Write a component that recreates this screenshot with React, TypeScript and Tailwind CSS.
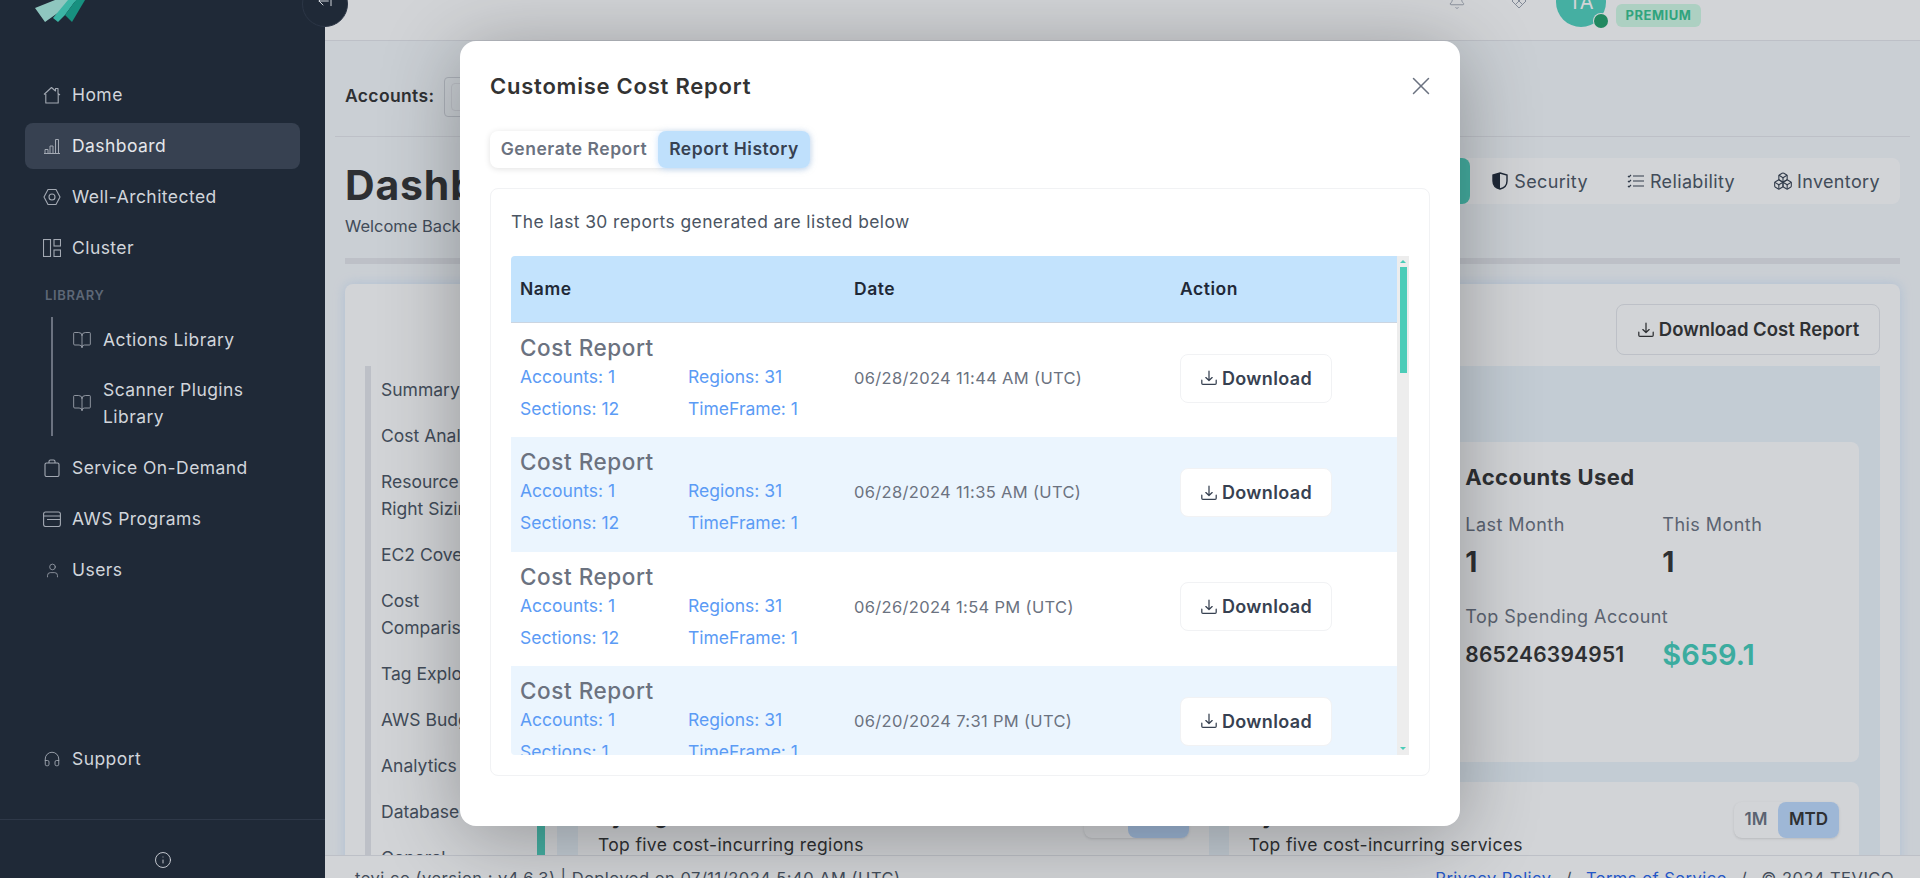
import React from "react";
import { BookOpen, User, Headphones, Info, X, Bell, ArrowRightFromLine, Boxes } from "lucide-react";

const Dl = ({ s = 18 }: { s?: number }) => (
  <svg width={s} height={s} viewBox="0 0 20 20" fill="none" stroke="currentColor" strokeWidth="1.4" strokeLinecap="round" strokeLinejoin="round" className="shrink-0">
    <path d="M10 2.500v10M6.500 9.500l3.500 3.300 3.500-3.300" />
    <path d="M2 12.500v3.200c0 .7.5 1.300 1.200 1.300h13.600c.7 0 1.200-.6 1.200-1.300v-3.200" />
  </svg>
);

const HomeI = () => (
  <svg width="18" height="18" viewBox="0 0 18 18" fill="none" stroke="currentColor" strokeWidth="1.1" strokeLinejoin="round">
    <path d="M1 8.500L8.500 1.500 12.500 5V2.500h2.500V7.500L17 9M2.800 8v9h12.400V8" />
  </svg>
);
const BarsI = () => (
  <svg width="18" height="18" viewBox="0 0 18 18" fill="none" stroke="currentColor" strokeWidth="1">
    <path d="M1 16.500h16M2 16.500v-4h3v4M7 16.500V9h3v7.500M12.500 16.500V2.500h3v14" />
  </svg>
);
const HexI = () => (
  <svg width="18" height="18" viewBox="0 0 18 18" fill="none" stroke="currentColor" strokeWidth="1.1">
    <path d="M5 1.500h8L17 9l-4 7.500H5L1 9z" />
    <circle cx="9" cy="9" r="3" />
  </svg>
);
const ClusterI = () => (
  <svg width="18" height="18" viewBox="0 0 18 18" fill="none" stroke="currentColor" strokeWidth="1.1">
    <rect x="0.500" y="0.500" width="7" height="17" />
    <rect x="11" y="0.500" width="6.500" height="6.500" />
    <rect x="11" y="11" width="6.500" height="6.500" />
  </svg>
);
const BagI = () => (
  <svg width="16" height="18" viewBox="0 0 16 18" fill="none" stroke="currentColor" strokeWidth="1.1">
    <rect x="1" y="4" width="14" height="13.500" rx="1.500" />
    <path d="M5 4V2.500C5 1.500 5.700 1 6.500 1h3c.8 0 1.500.5 1.500 1.500V4" />
  </svg>
);
const ProgI = () => (
  <svg width="18" height="16" viewBox="0 0 18 16" fill="none" stroke="currentColor" strokeWidth="1.1">
    <rect x="0.600" y="1" width="16.800" height="14.500" rx="2" />
    <path d="M0.600 5h16.800M4 8.500h13.400" />
  </svg>
);

const label = "text-[17.500px] tracking-[0.025em]";

const Item = ({ icon, text, active }: { icon: React.ReactNode; text: string; active?: boolean }) => (
  <div className={`mx-[25px] flex h-[46px] items-center gap-[11px] rounded-lg pl-[18px] ${active ? "bg-[#374151] text-[#e5e7eb]" : "text-[#d1d5db]"}`}>
    <span className="flex w-[18px] justify-center text-[#a3a9b3]">{icon}</span>
    <span className={label}>{text}</span>
  </div>
);

const Sidebar = () => (
  <aside className="relative z-20 flex w-[325px] shrink-0 flex-col bg-[#1f2937]">
    <svg width="60" height="24" viewBox="0 0 60 24" className="absolute left-[32px] top-0">
      <path d="M3 8 L13 22 L30 10 L45 0 L23 0z" fill="#8fc6bf" />
      <path d="M21 18 L26 22 L33 15 L44 0 L36 0z" fill="#3bb5a5" />
      <path d="M33 15 L40 22 L53 0 L44 0z" fill="#17907f" />
    </svg>
    <div className="absolute right-[-23px] top-[-19px] flex h-[46px] w-[46px] items-end justify-center rounded-full border border-[#2c3646] bg-[#1f2937] pb-[17px] text-[#d1d5db]">
      <ArrowRightFromLine size={16} strokeWidth={1.5} className="rotate-180" />
    </div>
    <nav className="mt-[72px] flex flex-1 flex-col gap-[5px]">
      <Item icon={<HomeI />} text="Home" />
      <Item active icon={<BarsI />} text="Dashboard" />
      <Item icon={<HexI />} text="Well-Architected" />
      <Item icon={<ClusterI />} text="Cluster" />
      <div className="ml-[45px] mt-[11px] text-[13px] font-semibold leading-[16px] tracking-[0.05em] text-[#5d6776]">LIBRARY</div>
      <div className="mb-[4px] ml-[51px] mt-[9px] flex flex-col border-l-2 border-[#6b7280]">
        <div className="flex h-[46px] items-center gap-[11px] pl-[19px] text-[#d1d5db]">
          <BookOpen size={20} strokeWidth={1} className="text-[#a3a9b3]" />
          <span className={label}>Actions Library</span>
        </div>
        <div className="mt-[6px] flex h-[67px] items-center gap-[11px] pl-[19px] text-[#d1d5db]">
          <BookOpen size={20} strokeWidth={1} className="text-[#a3a9b3]" />
          <span className={`${label} leading-[27px]`}>Scanner Plugins<br />Library</span>
        </div>
      </div>
      <Item icon={<BagI />} text="Service On-Demand" />
      <Item icon={<ProgI />} text="AWS Programs" />
      <Item icon={<User size={17} strokeWidth={1.1} />} text="Users" />
      <div className="mt-auto">
        <Item icon={<Headphones size={18} strokeWidth={1.2} />} text="Support" />
      </div>
    </nav>
    <div className="mt-[37px] flex h-[59px] items-start justify-center border-t border-[#2e3848] pt-[31px] text-[#d1d5db]">
      <Info size={18} strokeWidth={1.2} />
    </div>
  </aside>
);

const leftNav: string[][] = [
  ["Summary"], ["Cost Analysis"], ["Resource", "Right Sizing"], ["EC2 Coverage"], ["Cost", "Comparison"],
  ["Tag Explorer"], ["AWS Budgets"], ["Analytics"], ["Database"], ["General"],
];

const Background = () => (
  <main className="flex min-w-0 flex-1 flex-col bg-[#f6f9fc] text-[#333]">
    <header className="flex h-[41px] shrink-0 items-end justify-end border-b border-[#e5e7eb] bg-white pr-[219px]">
      <Bell size={18} strokeWidth={1.2} className="mb-[30px] text-[#9ca3af]" />
      <svg width="18" height="18" viewBox="0 0 18 18" fill="none" stroke="#9ca3af" strokeWidth="1" className="mb-[30px] ml-[44px]">
        <path d="M9 2l7 7-7 7-7-7zM5.500 5.500L12.500 12.500M12.500 5.500L5.500 12.500" />
      </svg>
      <div className="relative mb-[13px] ml-[28px] flex h-[50px] w-[50px] items-center justify-center rounded-full bg-[#4fd1bd] text-[20px] text-white">
        TA
        <span className="absolute bottom-[-1px] right-[-2px] h-[14px] w-[14px] rounded-full bg-[#22a06b] ring-1 ring-white" />
      </div>
      <div className="mb-[13px] ml-[10px] flex h-[23px] w-[85px] items-center justify-center rounded-md bg-[#d1fae5] text-[13px] font-bold tracking-[0.04em] text-[#34c38f]">PREMIUM</div>
    </header>
    <div className="min-h-0 flex-1 overflow-hidden pl-[20px] pr-[20px]">
      <div className="-mx-[10px] flex h-[96px] items-center border-b border-[#e5e7eb] px-[10px] pt-[16px]">
        <span className="text-[17.500px] font-semibold tracking-[0.02em]">Accounts:</span>
        <div className="ml-[10px] flex h-[40px] w-[200px] items-center rounded border border-[#d1d5db] px-[6px]">
          <div className="h-[28px] w-[60px] rounded border border-[#e5e7eb]" />
        </div>
      </div>
      <div className="mt-[21px] flex items-start justify-between">
        <div className="mt-[2px]">
          <h1 className="text-[41px] font-bold leading-[50px] tracking-[0.02em]">Dashboard</h1>
          <p className="mt-[6px] text-[16.500px] leading-[20px] text-[#4b5563]">Welcome Back, Tevico</p>
        </div>
        <div className="flex h-[46px] items-center rounded-lg bg-white pr-[20px] text-[18px] text-[#4b5563]">
          <div className="h-[46px] w-[120px] rounded-lg bg-[#4fd1bd]" />
          <svg width="16" height="18" viewBox="0 0 16 18" className="ml-[22px] mr-[6px]"><path d="M8 1l7 2v6c0 4-3 7-7 8-4-1-7-4-7-8V3z" fill="none" stroke="#1f2937" strokeWidth="1.4" /><path d="M8 1L1 3v6c0 4 3 7 7 8z" fill="#1f2937" /></svg>
          <span className="tracking-[0.02em]">Security</span>
          <svg width="17" height="14" viewBox="0 0 17 14" fill="none" stroke="#374151" strokeWidth="1.2" className="ml-[39px] mr-[6px]"><path d="M6 2h11M6 7h11M6 12h11M1 2l1 1 2-2M1 7l1 1 2-2M1 12l1 1 2-2" /></svg>
          <span className="tracking-[0.02em]">Reliability</span>
          <Boxes size={20} strokeWidth={1.3} color="#374151" className="ml-[38px] mr-[4px]" />
          <span className="tracking-[0.02em]">Inventory</span>
        </div>
      </div>
      <div className="mt-[22px] h-[6px] bg-[#e5e7eb]" />
      <section className="mt-[20px] rounded-lg bg-white p-[20px] shadow-[0_0_12px_rgba(147,197,253,0.35)]">
        <div className="flex justify-end">
          <button className="flex h-[51px] w-[264px] items-center justify-center gap-[4px] rounded-lg border border-[#e5e7eb] text-[18.500px] font-semibold">
            <Dl /> Download Cost Report
          </button>
        </div>
        <div className="mt-[11px] flex gap-[12px]">
          <div className="flex w-[180px] shrink-0 justify-between">
            <div className="w-[172px] overflow-hidden whitespace-nowrap border-l-[6px] border-[#e5e7eb] pl-[10px] text-[17.500px] leading-[27px] text-[#4b5563]">
              {leftNav.map((lines) => (
                <div key={lines.join()} className="py-[9.500px]">
                  {lines.map((l) => <div key={l}>{l}</div>)}
                </div>
              ))}
            </div>
            <div className="mt-[420px] h-[200px] w-[8px] bg-[#4fd1bd]" />
          </div>
          <div className="min-w-0 flex-1 bg-[#edf5fc] px-[21px] pt-[76px]">
            <div className="grid grid-cols-3 gap-[20px]">
              <div className="h-[320px] rounded-lg bg-white" />
              <div className="h-[320px] rounded-lg bg-white" />
              <div className="h-[320px] rounded-lg bg-white p-[20px]">
                <h3 className="mt-[1px] text-[22px] font-bold leading-[28px] tracking-[0.02em]">Accounts Used</h3>
                <div className="mt-[23px] grid grid-cols-[197px_1fr] text-[#6b7280]">
                  <div className="text-[18px] leading-[22px] tracking-[0.025em]">Last Month</div>
                  <div className="text-[18px] leading-[22px] tracking-[0.025em]">This Month</div>
                  <div className="mt-[9px] text-[28px] font-bold leading-[34px] text-[#333]">1</div>
                  <div className="mt-[9px] text-[28px] font-bold leading-[34px] text-[#333]">1</div>
                </div>
                <div className="mt-[27px] text-[18px] leading-[22px] tracking-[0.025em] text-[#6b7280]">Top Spending Account</div>
                <div className="mt-[7px] grid grid-cols-[197px_1fr] items-center">
                  <div className="text-[21px] font-semibold tracking-[0.01em]">865246394951</div>
                  <div className="text-[29px] font-semibold leading-[40px] text-[#43cdba]">$659.1</div>
                </div>
              </div>
            </div>
            <div className="mt-[20px] grid grid-cols-2 gap-[20px]">
              {[["By Region", "Top five cost-incurring regions"], ["By Service", "Top five cost-incurring services"]].map(([h, s]) => (
                <div key={h} className="flex h-[200px] justify-between rounded-lg bg-white p-[20px]">
                  <div>
                    <h3 className="text-[20px] font-bold leading-[30px] tracking-[0.02em]">{h}</h3>
                    <p className="text-[17.500px] leading-[26px] tracking-[0.02em]">{s}</p>
                  </div>
                  <div className="flex h-[36px] rounded-lg bg-white text-[17px] font-semibold shadow">
                    <span className="flex w-[44px] items-center justify-center text-[#6b7280]">1M</span>
                    <span className="flex w-[61px] items-center justify-center rounded-lg bg-[#bfdbfe]">MTD</span>
                  </div>
                </div>
              ))}
            </div>
          </div>
        </div>
      </section>
    </div>
    <footer className="flex h-[23px] shrink-0 justify-between overflow-hidden border-t border-[#e5e7eb] bg-white pl-[30px] pr-[26px] pt-[11px] text-[16.500px] leading-[22px] tracking-[0.03em] text-[#4b5563]">
      <span>tevi.co (version : v4.6.3) | Deployed on 07/11/2024 5:40 AM (UTC)</span>
      <span className="flex gap-[14px]">
        <span className="text-[#2563eb]">Privacy Policy</span><span>/</span>
        <span className="text-[#2563eb]">Terms of Service</span><span>/</span>
        <span>© 2024 TEVICO</span>
      </span>
    </footer>
  </main>
);

const rows = [
  { d: "06/28/2024 11:44 AM (UTC)", s: 12 },
  { d: "06/28/2024 11:35 AM (UTC)", s: 12 },
  { d: "06/26/2024 1:54 PM (UTC)", s: 12 },
  { d: "06/20/2024 7:31 PM (UTC)", s: 1 },
];

const Modal = () => (
  <div className="flex h-[785px] w-[1000px] flex-col rounded-2xl bg-white px-[30px] text-[#333] shadow-[0_10px_80px_rgba(0,0,0,0.3)]">
    <div className="mt-[30px] flex items-center justify-between">
      <h2 className="text-[22px] font-semibold leading-[30px] tracking-[0.035em]">Customise Cost Report</h2>
      <X size={30} strokeWidth={1.2} className="-mr-[6px] text-[#6b7280]" />
    </div>
    <div className="mt-[30px] flex h-[37px] w-[320px] rounded-lg bg-white text-[17.500px] font-semibold tracking-[0.03em] shadow-[0_1px_6px_rgba(0,0,0,0.12)]">
      <span className="flex w-[168px] items-center justify-center text-[#6b7280]">Generate Report</span>
      <span className="flex w-[152px] items-center justify-center rounded-lg bg-[#bfe0fc] text-[#374151] shadow-[0_1px_6px_rgba(147,197,253,0.5)]">Report History</span>
    </div>
    <div className="mt-[20px] h-[588px] rounded-lg border border-[#f1f2f4] px-[20px] pt-[20px]">
      <p className="text-[17.400px] leading-[26px] tracking-[0.025em] text-[#4b5563]">The last 30 reports generated are listed below</p>
      <div className="mt-[21px] flex h-[499px] overflow-hidden">
        <div className="w-[886px] overflow-hidden rounded-l">
          <div className="grid h-[67px] grid-cols-[334px_326px_1fr] items-center border-b border-[#cbd5e1] bg-[#c3e3fd] pl-[9px] text-[17.500px] font-semibold tracking-[0.03em] text-[#1f2937]">
            <span>Name</span><span>Date</span><span>Action</span>
          </div>
          {rows.map((r, i) => (
            <div key={i} className={`grid h-[114.400px] grid-cols-[334px_326px_1fr] pl-[9px] ${i % 2 ? "bg-[#ebf5fe]" : "bg-white"}`}>
              <div className="pt-[10px]">
                <div className="text-[22.500px] font-medium leading-[30px] tracking-[0.025em] text-[#6b7280]">Cost Report</div>
                <div className="mt-[1px] grid grid-cols-[168px_1fr] gap-y-[6px] text-[17.500px] leading-[26px] text-[#5b9bf5]">
                  <span>Accounts: 1</span><span>Regions: 31</span>
                  <span>Sections: {r.s}</span><span>TimeFrame: 1</span>
                </div>
              </div>
              <div className="flex items-center pb-[4px] text-[16.500px] tracking-[0.02em] text-[#6b7280]">{r.d}</div>
              <div className="flex items-center pb-[4px]">
                <button className="flex h-[49px] w-[152px] items-center justify-center gap-[4px] rounded-lg border border-[#f1f2f4] bg-white text-[18px] font-semibold tracking-[0.02em] text-[#374151]">
                  <Dl /> Download
                </button>
              </div>
            </div>
          ))}
        </div>
        <div className="flex w-[12px] shrink-0 flex-col items-center bg-[#ededed]">
          <span className="mt-[4px] h-0 w-0 border-x-[3px] border-b-[3px] border-x-transparent border-b-[#4bccb8]" />
          <span className="mt-[4px] h-[106px] w-[7px] bg-[#4bccb8]" />
          <span className="mb-[5px] mt-auto h-0 w-0 border-x-[3px] border-t-[3px] border-x-transparent border-t-[#4bccb8]" />
        </div>
      </div>
    </div>
  </div>
);

export default function App() {
  return (
    <div className="relative flex h-[878px] overflow-hidden font-['Inter',sans-serif]">
      <Sidebar />
      <Background />
      <div className="absolute inset-0 z-10 flex items-start justify-center bg-[#1f2937]/20 pt-[41px]">
        <Modal />
      </div>
    </div>
  );
}
